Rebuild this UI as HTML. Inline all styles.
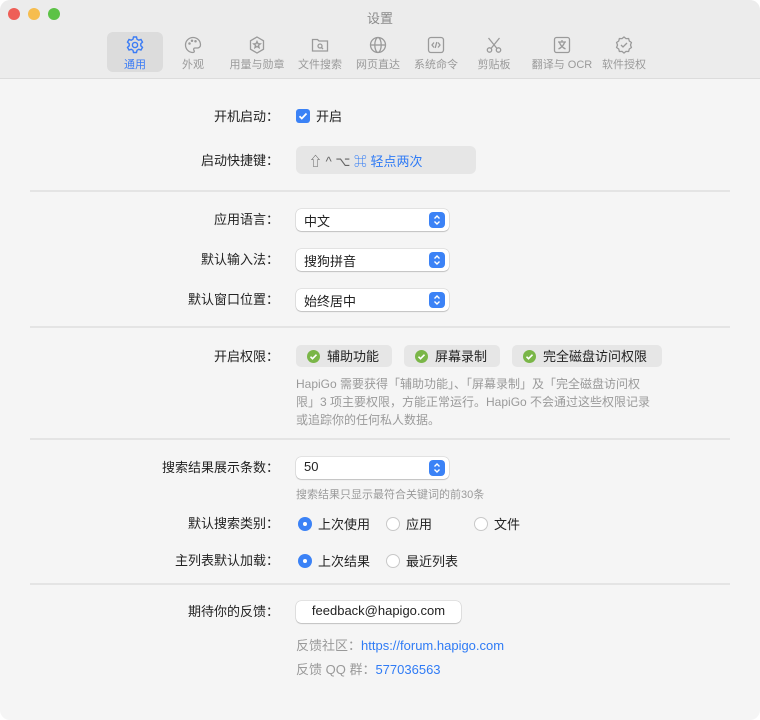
<!DOCTYPE html>
<html><head><meta charset="utf-8"><style>
*{margin:0;padding:0;box-sizing:border-box}
body{width:760px;height:720px;background:#fff;font-family:"Liberation Sans","Noto Sans CJK SC",sans-serif;overflow:hidden}
.win{position:absolute;left:0;top:0;width:760px;height:720px;background:#f5f5f5;border-radius:10px;overflow:hidden}
.tb{position:absolute;left:0;top:0;width:760px;height:79px;background:#ececec;border-bottom:1px solid #dcdcdc}
.dot{position:absolute;top:8px;width:12px;height:12px;border-radius:50%}
.title{position:absolute;top:8px;left:0;width:760px;text-align:center;font-size:13px;color:#8a8a8a}
.tab{position:absolute;top:32px;height:40px;text-align:center;font-size:11px;color:#9a9a9a}
.tab svg{display:block;margin:3px auto 1px}
.tab.sel{background:#dcdcdc;border-radius:6px;color:#3b7cf5}
.lbl{position:absolute;right:481px;font-size:13px;color:#222;white-space:nowrap}
.t{position:absolute;font-size:13px;color:#222;white-space:nowrap}
.hr{position:absolute;left:30px;width:700px;height:2px;background:#e4e4e4}
.pop{position:absolute;left:296px;width:153px;height:22px;background:#fff;border-radius:5px;box-shadow:0 0 0 .5px rgba(0,0,0,.15),0 1px 1px rgba(0,0,0,.15);font-size:13px;padding:2px 0 0 8px;color:#222}
.pop i{position:absolute;right:4px;top:3px;width:16px;height:16px;border-radius:4px;background:#3b82f6}
.pill{position:absolute;top:345px;height:22px;background:#e6e6e6;border-radius:5px;font-size:13px;color:#222;padding:1px 0 0 31px}
.pill b{position:absolute;left:11px;top:5px;width:13px;height:13px;border-radius:50%;background:#7ab648}
.pill b svg{position:absolute;left:0;top:0}
.g{position:absolute;left:296px;font-size:12px;color:#9a9a9a;line-height:18px;white-space:nowrap}
.rad{position:absolute;width:14px;height:14px;border-radius:50%;background:#fff;border:1px solid #c8c8c8}
.rad.on{background:#3b82f6;border:none}
.rad.on:after{content:"";position:absolute;left:5px;top:5px;width:4px;height:4px;border-radius:50%;background:#fff}
a{color:#2f7bf5;text-decoration:none}
</style></head><body><div class="win">
<div class="tb">
<div class="dot" style="left:8px;background:#ee5f57"></div>
<div class="dot" style="left:28px;background:#f6bd4f"></div>
<div class="dot" style="left:48px;background:#5cc246"></div>
<div class="title">设置</div>
<div class="tab sel" style="left:107px;width:56px"><svg width="20" height="20" viewBox="0 0 20 20" fill="none" stroke="#3b7cf5" stroke-width="1.4"><path d="M8.5 2h3l.5 2.2 1.8 1 2.2-.7 1.5 2.6-1.7 1.6v2.1l1.7 1.6-1.5 2.6-2.2-.7-1.8 1-.5 2.2h-3l-.5-2.2-1.8-1-2.2.7-1.5-2.6 1.7-1.6V8.7L2.5 7.1 4 4.5l2.2.7 1.8-1z"/><circle cx="10" cy="10" r="2.6"/></svg>通用</div>
<div class="tab" style="left:170px;width:46px"><svg width="20" height="20" viewBox="0 0 20 20" fill="none" stroke="#9a9a9a" stroke-width="1.3"><path d="M10 2.5a7.5 7.5 0 0 0 0 15c1.5 0 1.6-1.3.9-2.2-.7-.9-.2-2.3 1.1-2.3h2.5c1.7 0 3-1.4 3-3.1C17.5 5.6 14.2 2.5 10 2.5z"/><circle cx="6.5" cy="8.5" r=".6"/><circle cx="9" cy="5.8" r=".6"/><circle cx="12.5" cy="6.2" r=".6"/></svg>外观</div>
<div class="tab" style="left:226px;width:62px"><svg width="20" height="20" viewBox="0 0 20 20" fill="none" stroke="#9a9a9a" stroke-width="1.3"><path d="M10 2l6.5 3.8v8.4L10 18l-6.5-3.8V5.8z"/><path d="M10 6.5l1 2.2 2.3.2-1.8 1.5.6 2.3-2.1-1.3-2.1 1.3.6-2.3-1.8-1.5 2.3-.2z"/></svg>用量与勋章</div>
<div class="tab" style="left:295px;width:50px"><svg width="20" height="20" viewBox="0 0 20 20" fill="none" stroke="#9a9a9a" stroke-width="1.3"><path d="M2.5 4.5h5l1.5 1.5h8.5v10h-15z"/><circle cx="10" cy="11" r="2"/><path d="M11.5 12.5l1.5 1.5"/></svg>文件搜索</div>
<div class="tab" style="left:353px;width:50px"><svg width="20" height="20" viewBox="0 0 20 20" fill="none" stroke="#9a9a9a" stroke-width="1.3"><circle cx="10" cy="10" r="7.5"/><ellipse cx="10" cy="10" rx="3.2" ry="7.5"/><path d="M2.5 10h15"/></svg>网页直达</div>
<div class="tab" style="left:411px;width:50px"><svg width="20" height="20" viewBox="0 0 20 20" fill="none" stroke="#9a9a9a" stroke-width="1.3"><rect x="2.5" y="2.5" width="15" height="15" rx="2.5"/><path d="M8 7.5L6 10l2 2.5M12 7.5l2 2.5-2 2.5M10.8 7l-1.6 6"/></svg>系统命令</div>
<div class="tab" style="left:474px;width:40px"><svg width="20" height="20" viewBox="0 0 20 20" fill="none" stroke="#9a9a9a" stroke-width="1.3"><circle cx="5.5" cy="15" r="2.2"/><circle cx="14.5" cy="15" r="2.2"/><path d="M7 13.5L15.5 3M13 13.5L4.5 3"/></svg>剪贴板</div>
<div class="tab" style="left:526px;width:72px"><svg width="20" height="20" viewBox="0 0 20 20" fill="none" stroke="#9a9a9a" stroke-width="1.3"><rect x="2.5" y="2.5" width="15" height="15" rx="2"/><path d="M10 5v1.5M6 7h8M7.5 7.5c1 3 3 5 6 6.5M12.5 7.5c-1 3-3 5-6 6.5"/></svg>翻译与 OCR</div>
<div class="tab" style="left:598px;width:52px"><svg width="20" height="20" viewBox="0 0 20 20" fill="none" stroke="#9a9a9a" stroke-width="1.3"><path d="M10 2l2 1.6 2.6-.1.7 2.5 2.1 1.5-.9 2.5.9 2.5-2.1 1.5-.7 2.5-2.6-.1L10 18l-2-1.6-2.6.1-.7-2.5-2.1-1.5.9-2.5-.9-2.5 2.1-1.5.7-2.5 2.6.1z"/><path d="M7 10l2 2 4-4"/></svg>软件授权</div>
</div>

<div class="lbl" style="top:106px">开机启动：</div>
<div style="position:absolute;left:296px;top:109px;width:14px;height:14px;border-radius:3px;background:#3b82f6"><svg width="14" height="14" viewBox="0 0 14 14"><path d="M3.5 7.2l2.3 2.3 4.7-5" fill="none" stroke="#fff" stroke-width="1.8"/></svg></div>
<div class="t" style="left:316px;top:106px">开启</div>
<div class="lbl" style="top:150px">启动快捷键：</div>
<div style="position:absolute;left:296px;top:146px;width:180px;height:28px;background:#e6e6e6;border-radius:6px;font-size:13px;padding:5px 0 0 13px;color:#666">⇧ ^ ⌥ <span style="color:#2f7bf5">⌘ 轻点两次</span></div>
<div class="hr" style="top:190px"></div>

<div class="lbl" style="top:209px">应用语言：</div>
<div class="pop" style="top:209px">中文<i><svg width="16" height="16" viewBox="0 0 16 16" fill="none" stroke="#fff" stroke-width="1.4"><path d="M5.5 6.5L8 4l2.5 2.5M5.5 9.5L8 12l2.5-2.5"/></svg></i></div>
<div class="lbl" style="top:249px">默认输入法：</div>
<div class="pop" style="top:249px">搜狗拼音<i><svg width="16" height="16" viewBox="0 0 16 16" fill="none" stroke="#fff" stroke-width="1.4"><path d="M5.5 6.5L8 4l2.5 2.5M5.5 9.5L8 12l2.5-2.5"/></svg></i></div>
<div class="lbl" style="top:289px">默认窗口位置：</div>
<div class="pop" style="top:289px">始终居中<i><svg width="16" height="16" viewBox="0 0 16 16" fill="none" stroke="#fff" stroke-width="1.4"><path d="M5.5 6.5L8 4l2.5 2.5M5.5 9.5L8 12l2.5-2.5"/></svg></i></div>
<div class="hr" style="top:326px"></div>

<div class="lbl" style="top:346px">开启权限：</div>
<div class="pill" style="left:296px;width:96px"><b><svg width="13" height="13" viewBox="0 0 13 13"><path d="M3.5 6.7l2 2 4-4" fill="none" stroke="#fff" stroke-width="1.6"/></svg></b>辅助功能</div>
<div class="pill" style="left:404px;width:96px"><b><svg width="13" height="13" viewBox="0 0 13 13"><path d="M3.5 6.7l2 2 4-4" fill="none" stroke="#fff" stroke-width="1.6"/></svg></b>屏幕录制</div>
<div class="pill" style="left:512px;width:150px"><b><svg width="13" height="13" viewBox="0 0 13 13"><path d="M3.5 6.7l2 2 4-4" fill="none" stroke="#fff" stroke-width="1.6"/></svg></b>完全磁盘访问权限</div>
<div class="g" style="top:375px">HapiGo 需要获得「辅助功能」、「屏幕录制」及「完全磁盘访问权<br>限」3 项主要权限，方能正常运行。HapiGo 不会通过这些权限记录<br>或追踪你的任何私人数据。</div>
<div class="hr" style="top:438px"></div>

<div class="lbl" style="top:457px">搜索结果展示条数：</div>
<div class="pop" style="top:457px">50<i><svg width="16" height="16" viewBox="0 0 16 16" fill="none" stroke="#fff" stroke-width="1.4"><path d="M5.5 6.5L8 4l2.5 2.5M5.5 9.5L8 12l2.5-2.5"/></svg></i></div>
<div class="g" style="top:486px;font-size:11px">搜索结果只显示最符合关键词的前30条</div>
<div class="lbl" style="top:513px">默认搜索类别：</div>
<div class="rad on" style="left:298px;top:517px"></div><div class="t" style="left:318px;top:514px">上次使用</div>
<div class="rad" style="left:386px;top:517px"></div><div class="t" style="left:406px;top:514px">应用</div>
<div class="rad" style="left:474px;top:517px"></div><div class="t" style="left:494px;top:514px">文件</div>
<div class="lbl" style="top:550px">主列表默认加载：</div>
<div class="rad on" style="left:298px;top:554px"></div><div class="t" style="left:318px;top:551px">上次结果</div>
<div class="rad" style="left:386px;top:554px"></div><div class="t" style="left:406px;top:551px">最近列表</div>
<div class="hr" style="top:583px"></div>

<div class="lbl" style="top:601px">期待你的反馈：</div>
<div class="pop" style="top:601px;width:165px;padding-left:0;text-align:center">feedback@hapigo.com</div>
<div class="t" style="left:296px;top:635px;color:#999">反馈社区：<a>https://forum.hapigo.com</a></div>
<div class="t" style="left:296px;top:659px;color:#999">反馈 QQ 群：<a>577036563</a></div>
</div></body></html>
